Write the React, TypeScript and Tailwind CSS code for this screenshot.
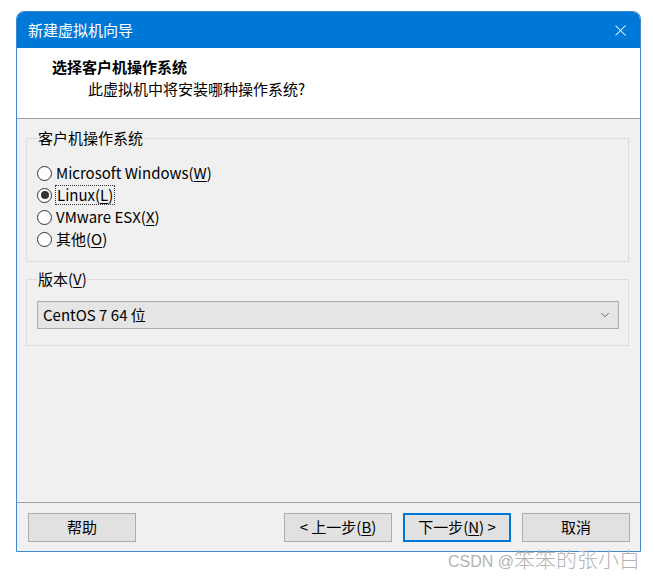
import { ChevronDown, X } from "lucide-react";

const font = { fontFamily: '"Noto Sans CJK SC", "Noto Sans", sans-serif' };

interface RadioProps {
  label: string;
  hotkey: string;
  suffix?: string;
  checked?: boolean;
  focused?: boolean;
}

function Radio({ label, hotkey, suffix = ")", checked = false, focused = false }: RadioProps) {
  return (
    <div className="flex items-center h-[22px]">
      <span className="w-[15px] h-[15px] rounded-full border border-[#333333] bg-white flex items-center justify-center shrink-0">
        {checked && <span className="w-[8px] h-[8px] rounded-full bg-[#333333]" />}
      </span>
      <span
        className={`ml-[4px] leading-[18px] ${focused ? "outline outline-1 outline-dotted outline-[#333333] px-[1px]" : ""}`}
      >
        {label}
        <span className="underline underline-offset-2">{hotkey}</span>
        {suffix}
      </span>
    </div>
  );
}

function Button({ children, primary = false }: { children: React.ReactNode; primary?: boolean }) {
  return (
    <button
      className={`w-[108px] h-[29px] bg-[#e1e1e1] text-[15px] text-black flex items-center justify-center ${
        primary ? "border-2 border-[#0078d7]" : "border border-[#adadad]"
      }`}
    >
      {children}
    </button>
  );
}

export default function App() {
  return (
    <div className="relative w-[654px] h-[580px] bg-white text-black" style={font}>
      <div className="pl-[16px] pt-[11px]">
        <div className="w-[625px] h-[541px] flex flex-col rounded-t-[8px] overflow-hidden border border-[#3d8ad3]">
          {/* title bar */}
          <div className="h-[36px] bg-[#0078d7] flex items-center justify-between pl-[11px] pr-[10px] text-white">
            <span className="text-[15px]">新建虚拟机向导</span>
            <X className="w-[19px] h-[19px]" strokeWidth={1.3} />
          </div>

          {/* header */}
          <div className="h-[71px] bg-white border-b border-[#a0a0a0] pl-[35px] pt-[9px]">
            <div className="text-[15px] font-bold leading-[20px]">选择客户机操作系统</div>
            <div className="text-[15px] leading-[20px] mt-[2px] ml-[36px]">此虚拟机中将安装哪种操作系统?</div>
          </div>

          {/* body */}
          <div className="flex-1 bg-[#f0f0f0] pl-[9px] pr-[11px] pt-[9px] text-[15px]">
            <fieldset className="border border-[#dcdcdc] pl-[10px] pr-[10px] pt-[14px] pb-[11px]">
              <legend className="px-[1px] leading-[20px]">客户机操作系统</legend>
              <Radio label="Microsoft Windows(" hotkey="W" />
              <Radio label="Linux(" hotkey="L" checked focused />
              <Radio label="VMware ESX(" hotkey="X" />
              <Radio label="其他(" hotkey="O" />
            </fieldset>

            <fieldset className="mt-[7px] border border-[#dcdcdc] pl-[10px] pr-[9px] pt-[12px] pb-[16px]">
              <legend className="px-[1px] leading-[20px]">
                版本(<span className="underline underline-offset-2">V</span>)
              </legend>
              <div className="h-[28px] bg-[#e5e5e5] border border-[#adadad] flex items-center justify-between pl-[5px] pr-[6px]">
                <span>CentOS 7 64 位</span>
                <ChevronDown className="w-[14px] h-[14px] text-[#555555]" strokeWidth={1.5} />
              </div>
            </fieldset>
          </div>

          {/* footer */}
          <div className="h-[49px] bg-[#f0f0f0] border-t border-[#a0a0a0] flex items-start pt-[10px] pl-[11px] pr-[10px]">
            <Button>帮助</Button>
            <div className="ml-auto flex gap-[11px]">
              <Button>
                &lt; 上一步(<span className="underline underline-offset-2">B</span>)
              </Button>
              <Button primary>
                下一步(<span className="underline underline-offset-2">N</span>) &gt;
              </Button>
              <Button>取消</Button>
            </div>
          </div>
        </div>
      </div>

      {/* watermark */}
      <div className="absolute right-[14px] top-[548px] flex items-baseline text-[#b4b4b4] leading-none">
        <span className="text-[16px]" style={{ fontFamily: '"Liberation Sans", sans-serif' }}>
          CSDN @
        </span>
        <span className="text-[21px] font-light">笨笨的张小白</span>
      </div>
    </div>
  );
}
